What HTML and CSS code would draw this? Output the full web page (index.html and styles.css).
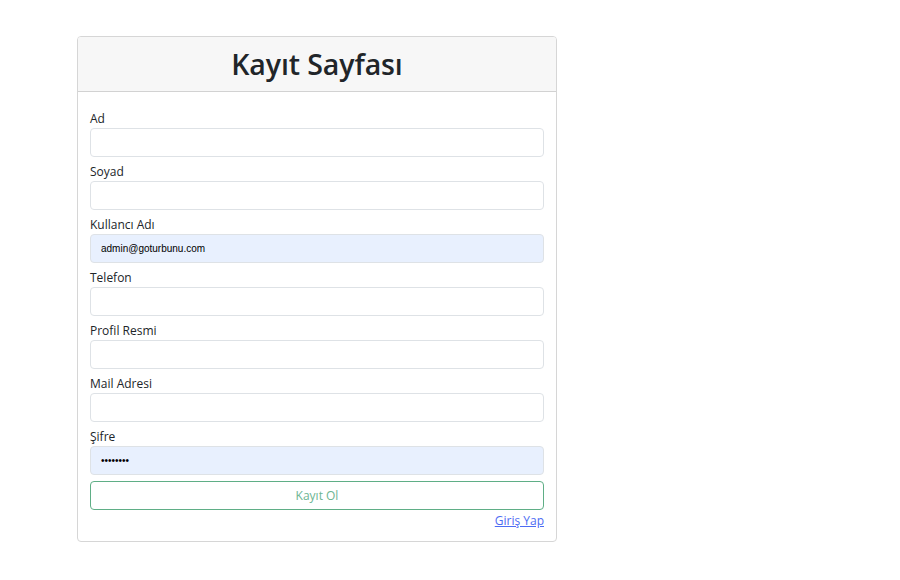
FILE: index.html
```html
<!DOCTYPE html>
<html lang="tr">
<head>
<meta charset="utf-8">
<title>Kayıt Sayfası</title>
<link rel="stylesheet" href="styles.css">
</head>
<body>
<div class="page">
  <div class="card">
    <div class="card-header"><h1 class="title">Kayıt Sayfası</h1></div>
    <form class="card-body">
      <div class="group"><label class="label">Ad</label><input class="input" type="text"></div>
      <div class="group"><label class="label">Soyad</label><input class="input" type="text"></div>
      <div class="group"><label class="label">Kullancı Adı</label><input class="input filled" type="text" value="admin@goturbunu.com"></div>
      <div class="group"><label class="label">Telefon</label><input class="input" type="text"></div>
      <div class="group"><label class="label">Profil Resmi</label><input class="input" type="text"></div>
      <div class="group"><label class="label">Mail Adresi</label><input class="input" type="text"></div>
      <div class="group"><label class="label">Şifre</label><input class="input filled pass" type="password" value="12345678"></div>
      <button class="btn" type="button">Kayıt Ol</button>
      <div class="links"><a class="link" href="#">Giriş Yap</a></div>
    </form>
  </div>
</div>
</body>
</html>
```
FILE: styles.css
```css
* { box-sizing: border-box; }
html, body { margin: 0; padding: 0; background: #fff; }
body { font-family: "Open Sans", "Noto Sans", sans-serif; color: #212529; }
.page { padding: 36px 0 0 77px; }
.card {
  width: 480px;
  border: 1px solid #d6d6d6;
  border-radius: 4px;
  background: #fff;
  overflow: hidden;
}
.card-header {
  height: 55px;
  background: #f7f7f7;
  border-bottom: 1px solid #d2d2d2;
  display: flex;
  align-items: center;
  justify-content: center;
}
.title {
  margin: 0;
  font-size: 28.5px;
  font-weight: 600;
  color: #212529;
  letter-spacing: -0.1px;
}
.card-body {
  padding: 12px 12px 12px 12px;
  display: flex;
  flex-direction: column;
}
.group { display: flex; flex-direction: column; }
.label {
  font-size: 12px;
  line-height: 17px;
  padding-top: 6px;
  margin-bottom: 1px;
  color: #212529;
}
.input {
  height: 29px;
  width: 100%;
  border: 1px solid #dee2e6;
  border-radius: 4px;
  background: #fff;
  padding: 0 10px;
  font-family: "Liberation Sans", Arial, sans-serif;
  font-size: 10px;
  color: #000;
  outline: none;
}
.input.filled { background: #e8f0fe; }
.input.pass { font-size: 10px; letter-spacing: 0; }
.btn {
  margin-top: 6px;
  height: 29px;
  width: 100%;
  border: 1px solid #5fae86;
  border-radius: 4px;
  background: #fff;
  color: #6cb592;
  font-family: "Open Sans", "Noto Sans", sans-serif;
  font-size: 12px;
}
.links {
  display: flex;
  justify-content: flex-end;
  margin-top: 2px;
  line-height: 17px;
}
.link {
  font-size: 12px;
  color: #4d6cf3;
  text-decoration: underline;
}
```
